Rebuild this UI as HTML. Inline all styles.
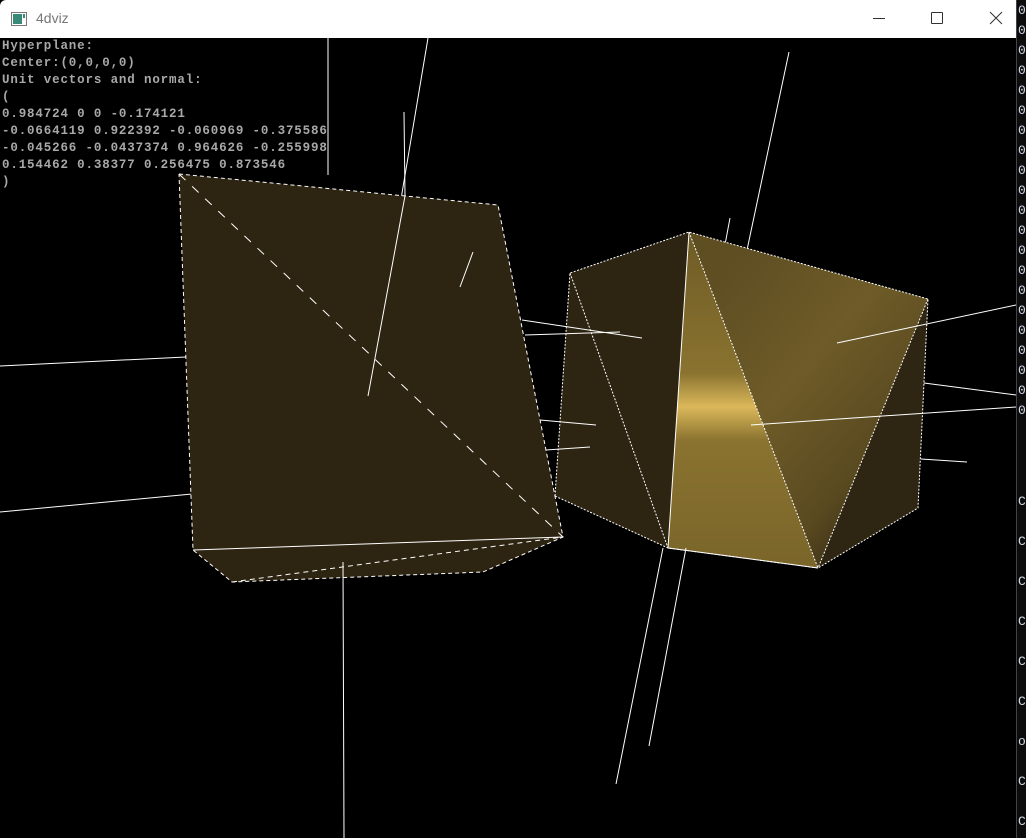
<!DOCTYPE html>
<html><head><meta charset="utf-8"><style>
html,body{margin:0;padding:0;background:#0c0c0c;width:1026px;height:838px;overflow:hidden;position:relative}
.win{position:absolute;left:0;top:0;width:1016px;height:838px;background:#000;border-right:1px solid #444}
.title{position:absolute;left:0;top:0;width:1016px;height:38px;background:#fff;border-top-left-radius:6px;font-family:"Liberation Sans",sans-serif;font-size:14px;color:#777}
.txt{position:absolute;left:2px;top:38px;font-family:"Liberation Mono","DejaVu Sans Mono",monospace;font-size:12.5px;line-height:17px;color:#a8a8a8;font-weight:bold;white-space:pre;letter-spacing:0.85px}
.side{position:absolute;left:1018px;width:8px;font-family:"Liberation Mono",monospace;font-size:13px;color:#cfd8e8;line-height:20px;overflow:hidden}
</style></head><body>
<div class="win">
<svg width="1016" height="838" style="position:absolute;left:0;top:0">
<defs>
<linearGradient id="g1" x1="0" y1="232" x2="0" y2="568" gradientUnits="userSpaceOnUse">
<stop offset="0" stop-color="#6e5b26"/><stop offset="0.42" stop-color="#8a7330"/><stop offset="0.52" stop-color="#dbb85a"/><stop offset="0.62" stop-color="#8a7330"/><stop offset="1" stop-color="#7a652a"/></linearGradient>
<linearGradient id="g2" x1="700" y1="300" x2="930" y2="500" gradientUnits="userSpaceOnUse">
<stop offset="0" stop-color="#5e4e22"/><stop offset="0.4" stop-color="#6e5b28"/><stop offset="0.75" stop-color="#5a4a20"/><stop offset="1" stop-color="#2e2612"/></linearGradient>
</defs>
<g stroke="#fff" stroke-width="1" fill="none">
<line x1="328" y1="38" x2="328" y2="175"/>
<line x1="428" y1="38" x2="368" y2="396"/>
<line x1="404" y1="112" x2="405" y2="196"/>
<line x1="0" y1="366" x2="186" y2="357"/>
<line x1="0" y1="512" x2="192" y2="494"/>
<line x1="789" y1="52" x2="747" y2="250"/>
<line x1="730" y1="218" x2="724" y2="250"/>
</g>
<polygon points="179,174 498,205 563,537 483,572 232,582 193,550" fill="#2d2412"/>
<polygon points="570,273 689,232 668,548 555,496" fill="#2d2512"/>
<polygon points="689,232 818,568 668,548" fill="url(#g1)"/>
<polygon points="689,232 928,299 818,568" fill="url(#g2)"/>
<polygon points="928,299 918,508 818,568" fill="#2e2612"/>
<g stroke="#fff" stroke-width="1" fill="none">
<polyline points="179,174 498,205 563,537 483,572 232,582 193,550 179,174" stroke-dasharray="4,3"/>
<line x1="193" y1="550" x2="563" y2="537"/>
<line x1="179" y1="174" x2="563" y2="537" stroke-dasharray="9,9"/>
<line x1="232" y1="582" x2="563" y2="537" stroke-dasharray="5,4"/>
<line x1="405" y1="196" x2="368" y2="396"/>
<line x1="473" y1="252" x2="460" y2="287"/>
<line x1="522" y1="320" x2="642" y2="338"/>
<line x1="525" y1="335" x2="620" y2="332"/>
<line x1="540" y1="420" x2="596" y2="425"/>
<line x1="546" y1="450" x2="590" y2="447"/>
<line x1="343" y1="562" x2="344" y2="838"/>
<polyline points="555,496 570,273 689,232 928,299 918,508 818,568 668,548 555,496" stroke-dasharray="2,1.5"/>
<line x1="689" y1="232" x2="668" y2="548"/>
<line x1="570" y1="273" x2="668" y2="548" stroke-dasharray="2,1.5"/>
<line x1="689" y1="232" x2="818" y2="568" stroke-dasharray="2,1.5"/>
<line x1="928" y1="299" x2="818" y2="568" stroke-dasharray="2,1.5"/>
<line x1="668" y1="548" x2="818" y2="568"/>
<line x1="837" y1="343" x2="1016" y2="305"/>
<line x1="751" y1="425" x2="1016" y2="407"/>
<line x1="924" y1="383" x2="1016" y2="395"/>
<line x1="921" y1="459" x2="967" y2="462"/>
<line x1="663" y1="548" x2="616" y2="784"/>
<line x1="686" y1="548" x2="649" y2="746"/>
</g>
</svg>
<div class="title">
<svg width="16" height="14" style="position:absolute;left:11px;top:12px"><rect x="0.5" y="0.5" width="15" height="13" fill="#fff" stroke="#777"/><rect x="2" y="2" width="9" height="10" fill="#3a8a7a"/><rect x="12" y="2" width="2" height="4" fill="#3a8a7a"/></svg>
<span style="position:absolute;left:36px;top:10px">4dviz</span>
<div style="position:absolute;left:873px;top:18px;width:12px;height:1px;background:#333"></div>
<div style="position:absolute;left:931px;top:12px;width:10px;height:10px;border:1px solid #333;border-radius:1px"></div>
<svg width="14" height="14" style="position:absolute;left:989px;top:11px"><path d="M1 1L13 13M13 1L1 13" stroke="#333" stroke-width="1"/></svg>
</div>
<div class="txt">Hyperplane:
Center:(0,0,0,0)
Unit vectors and normal:
(
0.984724 0 0 -0.174121
-0.0664119 0.922392 -0.060969 -0.375586
-0.045266 -0.0437374 0.964626 -0.255998
0.154462 0.38377 0.256475 0.873546
)</div>
</div>
<div class="side" style="top:1px">0<br>0<br>0<br>0<br>0<br>0<br>0<br>0<br>0<br>0<br>0<br>0<br>0<br>0<br>0<br>0<br>0<br>0<br>0<br>0<br>0</div>
<div class="side" style="top:482px;line-height:40px">C<br>C<br>C<br>C<br>C<br>C<br>o<br>C<br>C</div>
</body></html>
